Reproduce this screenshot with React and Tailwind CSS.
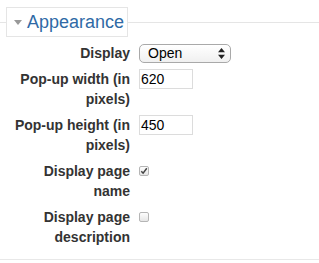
import React from 'react';

const font = { fontFamily: '"Liberation Sans", Arial, sans-serif' };

function Row({ label, children }) {
  return (
    <div className="flex items-start mb-[6px]">
      <div className="w-[122px] ml-[8px] text-right font-bold text-[14px] leading-[20px] text-[#333]">{label}</div>
      <div className="ml-[9px] flex items-center min-h-[20px]">{children}</div>
    </div>
  );
}

function Checkbox({ checked }) {
  return (
    <span className="w-[10px] h-[10px] rounded-[2px] border border-[#b5b5b5] bg-gradient-to-b from-[#fdfdfd] to-[#e6e6e6] flex items-center justify-center">
      {checked && (
        <svg width="8" height="8" viewBox="0 0 8 8">
          <path d="M1.3 4.3 L3.1 6.2 L6.8 1.3" fill="none" stroke="#444" strokeWidth="1.5" />
        </svg>
      )}
    </span>
  );
}

export default function App() {
  return (
    <div className="w-[319px] h-[263px] bg-white relative" style={font}>
      <div className="flex items-center pt-[7px]">
        <div className="w-[6px] h-px bg-[#e5e5e5]" />
        <div className="w-[122px] h-[30px] border border-[#e5e5e5] flex items-center pl-[7px]">
          <svg width="9" height="6" viewBox="0 0 9 6" className="mr-[4px] mt-[2px]">
            <path d="M0 0 H8 L4 5 Z" fill="#999" />
          </svg>
          <span className="text-[18px] text-[#2f6aa6] leading-none">Appearance</span>
        </div>
        <div className="flex-1 h-px bg-[#e5e5e5]" />
      </div>

      <div className="pt-[6px]">
        <Row label="Display">
          <div className="w-[92px] h-[19px] rounded-[5px] border border-[#a9a9a9] bg-gradient-to-b from-[#ffffff] to-[#f0f0f0] flex items-center justify-between pl-[8px] pr-[5px]">
            <span className="text-[14px] text-black">Open</span>
            <svg width="7" height="11" viewBox="0 0 7 11">
              <path d="M3.5 0 L7 4.2 H0 Z M3.5 11 L7 6.8 H0 Z" fill="#222" />
            </svg>
          </div>
        </Row>
        <Row label={<>Pop-up width (in<br />pixels)</>}>
          <div className="w-[54px] h-[20px] border border-[#dcdcdc] text-[14px] leading-[18px] pl-[1px] text-black">620</div>
        </Row>
        <Row label={<>Pop-up height (in<br />pixels)</>}>
          <div className="w-[54px] h-[20px] border border-[#dcdcdc] text-[14px] leading-[18px] pl-[1px] text-black">450</div>
        </Row>
        <Row label={<>Display page<br />name</>}>
          <Checkbox checked />
        </Row>
        <Row label={<>Display page<br />description</>}>
          <Checkbox />
        </Row>
      </div>

      <div className="absolute left-0 right-0 top-[259px] h-px bg-[#e8e8e8]" />
    </div>
  );
}
